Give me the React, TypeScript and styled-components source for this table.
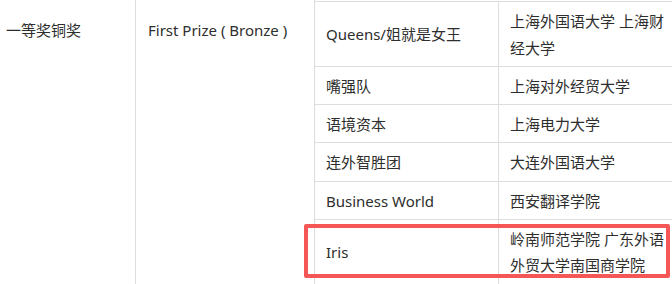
import styled, { createGlobalStyle } from "styled-components";

const GlobalStyle = createGlobalStyle`
  html, body {
    margin: 0;
    padding: 0;
    background: #ffffff;
    overflow: hidden;
  }
  * {
    box-sizing: border-box;
  }
`;

export const Page = styled.div`
  width: 672px;
  height: 284px;
  overflow: hidden;
  background: #ffffff;
`;

export const Table = styled.div`
  display: flex;
  align-items: stretch;
  margin-left: -6px;
  height: 300px;
  font-family: "Noto Sans", "Noto Sans CJK SC", sans-serif;
  font-size: 15px;
  line-height: 26.5px;
  color: #2e2e2e;
`;

export const SpanCell = styled.div<{ $width: number }>`
  flex: 0 0 ${(props) => props.$width}px;
  width: ${(props) => props.$width}px;
  padding: 17px 11px 0 12px;
  border-right: 1px solid #dddddd;
  white-space: nowrap;
`;

export const Teams = styled.div`
  display: flex;
  flex-direction: column;
  margin-top: 1px;
  border-top: 1px solid #dddddd;
  flex: 0 0 auto;
`;

export const Row = styled.div`
  position: relative;
  display: grid;
  grid-template-columns: 184px 186px;
  border-bottom: 1px solid #dddddd;
`;

export const Cell = styled.div<{ $last?: boolean }>`
  display: flex;
  align-items: center;
  padding: 6px 12px 4.75px 11px;
  border-right: ${(props) => (props.$last ? "none" : "1px solid #dddddd")};
`;

export const Highlight = styled.div`
  position: absolute;
  left: -11px;
  top: 4px;
  width: 366px;
  height: 54px;
  border: 4px solid #f55656;
  border-radius: 2px;
  pointer-events: none;
`;

interface Team {
  name: string;
  school: string;
  marked?: boolean;
}

const teams: Team[] = [
  { name: "Queens/姐就是女王", school: "上海外国语大学 上海财经大学" },
  { name: "嘴强队", school: "上海对外经贸大学" },
  { name: "语境资本", school: "上海电力大学" },
  { name: "连外智胜团", school: "大连外国语大学" },
  { name: "Business World", school: "西安翻译学院" },
  { name: "Iris", school: "岭南师范学院 广东外语外贸大学南国商学院", marked: true },
];

export default function App() {
  return (
    <>
      <GlobalStyle />
      <Page>
        <Table>
          <SpanCell $width={142}>一等奖铜奖</SpanCell>
          <SpanCell $width={179}>First Prize ( Bronze )</SpanCell>
          <Teams>
            {teams.map((team) => (
              <Row key={team.name}>
                <Cell>{team.name}</Cell>
                <Cell $last>{team.school}</Cell>
                {team.marked && <Highlight />}
              </Row>
            ))}
          </Teams>
        </Table>
      </Page>
    </>
  );
}
